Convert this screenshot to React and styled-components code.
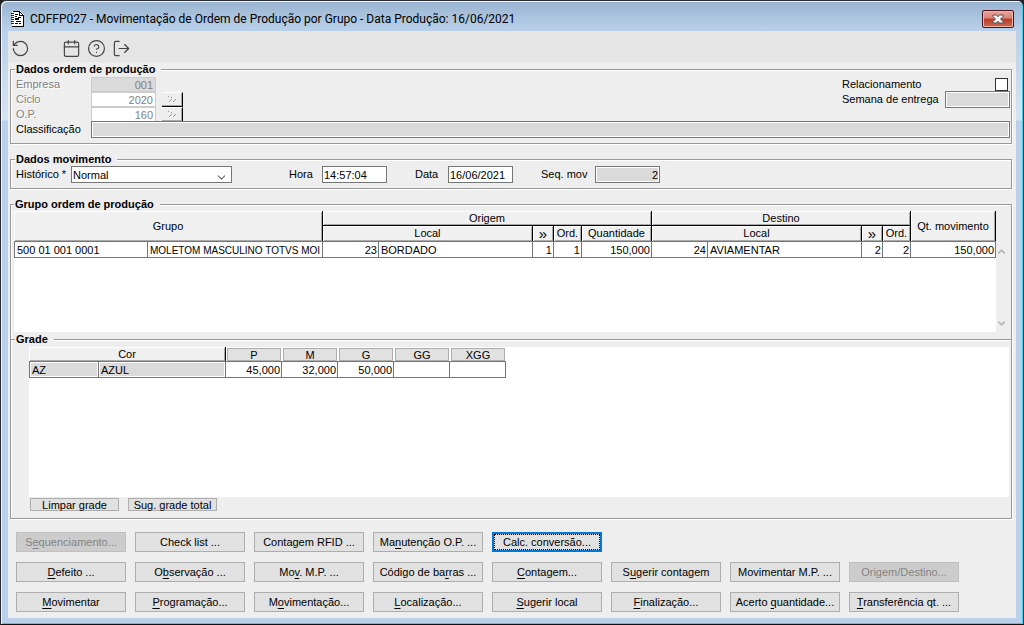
import React from "react";
import styled, { createGlobalStyle, css } from "styled-components";
import {
  Calendar,
  ChevronDown,
  ChevronUp,
  CircleHelp,
  LogOut,
  RotateCcw,
} from "lucide-react";

const actions = [
  [
    { label: "S&equenciamento...", disabled: true },
    { label: "Check list ..." },
    { label: "Contagem RFID ..." },
    { label: "Ma&nutenção O.P. ..." },
    { label: "Calc. conversão...", active: true },
  ],
  [
    { label: "&Defeito ..." },
    { label: "O&bservação ..." },
    { label: "Mo&v. M.P. ..." },
    { label: "Código de ba&rras ..." },
    { label: "&Contagem..." },
    { label: "S&ugerir contagem" },
    { label: "Movimentar M.P. ..." },
    { label: "Origem/Destino...", disabled: true },
  ],
  [
    { label: "&Movimentar" },
    { label: "&Programação..." },
    { label: "M&ovimentação..." },
    { label: "&Localização..." },
    { label: "&Sugerir local" },
    { label: "&Finalização..." },
    { label: "Acerto &quantidade..." },
    { label: "&Transferência qt. ..." },
  ],
];

const sizes = [
  { name: "P", value: "45,000" },
  { name: "M", value: "32,000" },
  { name: "G", value: "50,000" },
  { name: "GG", value: "" },
  { name: "XGG", value: "" },
];

const groupColumns = [134, null, 56, 154, 21, 28, 70, 56, 154, 21, 28, 85];
const gradeColumns = [70, 127, 56, 56, 56, 56, 56];

// "&" marks the access key of a label
const Mnemonic = ({ text }) => {
  const at = text.indexOf("&");
  if (at < 0) return <span>{text}</span>;
  return (
    <span>
      {text.slice(0, at)}
      <u>{text[at + 1]}</u>
      {text.slice(at + 2)}
    </span>
  );
};

const Columns = ({ widths }) => (
  <colgroup>
    {widths.map((w, i) => (
      <col key={i} width={w ?? undefined} />
    ))}
  </colgroup>
);

const DocumentIcon = () => (
  <svg width="13" height="16" viewBox="0 0 13 16" shapeRendering="crispEdges">
    <path d="M1 0h8l4 4v12H1z" fill="#fff" />
    <path d="M2 0h6v1H2zM1 15h11v1H1zM12 4h1v12h-1zM8 0h1v4h4v1H8z" fill="#000" />
    <path d="M9 1h1v1H9zM10 2h1v1h-1zM11 3h1v1h-1z" fill="#000" />
    <path
      d="M4 3h3v1H4zM4 5h2v1H4zM7 6h3v1H7zM4 7h4v2H4zM5 10h5v1H5zM4 12h3v1H4zM8 12h2v1H8z"
      fill="#000"
    />
    <path
      d="M0 2h3v1H0zM0 4h3v1H0zM0 6h3v1H0zM0 8h3v1H0zM0 10h3v1H0zM0 12h3v1H0z"
      fill="#222"
    />
  </svg>
);

const CloseIcon = () => (
  <svg width="12" height="10" viewBox="0 0 12 10">
    <path
      d="M1 1h3.500L6 2.800 7.500 1H11v1.500L8.500 5 11 7.500V9H7.500L6 7.200 4.500 9H1V7.500L3.500 5 1 2.500z"
      fill="#f5f5f5"
      stroke="#4d5564"
      strokeWidth="1"
    />
  </svg>
);

const LookupIcon = () => (
  <svg width="12" height="8" viewBox="0 0 12 8">
    <path d="M2 0l1 1M5 1l1 1M3 6l3-3M7 6l3-3" stroke="#999" />
    <path d="M4 7l3-3M8 7l3-3" stroke="#fff" />
  </svg>
);

export default function App() {
  return (
    <Window>
      <GlobalStyle />
      <TitleBar>
        <DocumentIcon />
        <Title>
          CDFFP027 - Movimentação de Ordem de Produção por Grupo - Data
          Produção: 16/06/2021
        </Title>
        <CloseButton aria-label="Fechar">
          <CloseIcon />
        </CloseButton>
      </TitleBar>
      <Client>
        <Toolbar>
          <ToolButton aria-label="Desfazer" $spaced>
            <RotateCcw size={19} strokeWidth={1.5} />
          </ToolButton>
          <ToolButton aria-label="Calendário">
            <Calendar size={19} strokeWidth={1.5} />
          </ToolButton>
          <ToolButton aria-label="Ajuda">
            <CircleHelp size={19} strokeWidth={1.5} />
          </ToolButton>
          <ToolButton aria-label="Sair">
            <LogOut size={19} strokeWidth={1.5} />
          </ToolButton>
        </Toolbar>

        <Group>
          <Legend>Dados ordem de produção</Legend>
          <OrderHead>
            <div>
              <Row>
                <Label htmlFor="empresa" $width={76} $muted>
                  Empresa
                </Label>
                <FlatField id="empresa" defaultValue="001" readOnly $filled />
              </Row>
              <Row>
                <Label htmlFor="ciclo" $width={76} $muted>
                  Ciclo
                </Label>
                <FlatField id="ciclo" defaultValue="2020" readOnly />
                <LookupButton aria-label="Pesquisar ciclo">
                  <LookupIcon />
                </LookupButton>
              </Row>
              <Row>
                <Label htmlFor="op" $width={76} $muted>
                  O.P.
                </Label>
                <FlatField id="op" defaultValue="160" readOnly />
                <LookupButton aria-label="Pesquisar O.P.">
                  <LookupIcon />
                </LookupButton>
              </Row>
            </div>
            <div>
              <Row>
                <Label htmlFor="relacionamento" $width={104}>
                  Relacionamento
                </Label>
                <CheckBox id="relacionamento" type="checkbox" />
              </Row>
              <Row>
                <Label htmlFor="semana" $width={104}>
                  Semana de entrega
                </Label>
                <Field id="semana" readOnly $filled />
              </Row>
            </div>
          </OrderHead>
          <FieldRow>
            <Label htmlFor="classificacao" $width={76}>
              Classificação
            </Label>
            <Field id="classificacao" readOnly $filled $grow />
          </FieldRow>
        </Group>

        <Group>
          <Legend>Dados movimento</Legend>
          <FieldRow>
            <Label htmlFor="historico" $width={56}>
              Histórico *
            </Label>
            <SelectBox>
              <select id="historico" defaultValue="Normal">
                <option>Normal</option>
              </select>
              <ChevronDown size={13} strokeWidth={2} />
            </SelectBox>
            <Pair>
              <Label htmlFor="hora" $width={34}>
                Hora
              </Label>
              <Field id="hora" defaultValue="14:57:04" />
            </Pair>
            <Pair $near>
              <Label htmlFor="data" $width={34}>
                Data
              </Label>
              <Field id="data" defaultValue="16/06/2021" />
            </Pair>
            <Pair $near>
              <Label htmlFor="seq" $width={55}>
                Seq. mov
              </Label>
              <Field id="seq" defaultValue="2" readOnly $filled $right />
            </Pair>
          </FieldRow>
        </Group>

        <Group $open>
          <Legend>Grupo ordem de produção</Legend>
          <GroupPanel>
            <GroupArea>
              <GroupTable>
                <Columns widths={groupColumns} />
                <thead>
                  <tr>
                    <Head colSpan={2} rowSpan={2}>
                      Grupo
                    </Head>
                    <Head colSpan={5} $line>
                      Origem
                    </Head>
                    <Head colSpan={4} $line>
                      Destino
                    </Head>
                    <Head rowSpan={2}>Qt. movimento</Head>
                  </tr>
                  <tr>
                    <Head colSpan={2}>Local</Head>
                    <Head $glyph>»</Head>
                    <Head>Ord.</Head>
                    <Head>Quantidade</Head>
                    <Head colSpan={2}>Local</Head>
                    <Head $glyph>»</Head>
                    <Head>Ord.</Head>
                  </tr>
                </thead>
                <tbody>
                  <tr>
                    <Cell>500 01 001 0001</Cell>
                    <Cell $small>MOLETOM MASCULINO TOTVS MOI</Cell>
                    <Cell $right>23</Cell>
                    <Cell>BORDADO</Cell>
                    <Cell $right>1</Cell>
                    <Cell $right>1</Cell>
                    <Cell $right>150,000</Cell>
                    <Cell $right>24</Cell>
                    <Cell>AVIAMENTAR</Cell>
                    <Cell $right>2</Cell>
                    <Cell $right>2</Cell>
                    <Cell $right>150,000</Cell>
                  </tr>
                </tbody>
              </GroupTable>
              <Blank />
            </GroupArea>
            <ScrollTrack>
              <ChevronUp size={11} strokeWidth={4} />
              <ChevronDown size={11} strokeWidth={4} />
            </ScrollTrack>
          </GroupPanel>
        </Group>

        <Group $joined>
          <Legend>Grade</Legend>
          <GradePanel>
            <GradeTable>
              <Columns widths={gradeColumns} />
              <thead>
                <tr>
                  <Head colSpan={2}>Cor</Head>
                  {sizes.map(({ name }) => (
                    <SizeHead key={name}>
                      <span>{name}</span>
                    </SizeHead>
                  ))}
                </tr>
              </thead>
              <tbody>
                <tr>
                  <Cell $filled>AZ</Cell>
                  <Cell $filled>AZUL</Cell>
                  {sizes.map(({ name, value }) => (
                    <Cell key={name} $right>
                      {value}
                    </Cell>
                  ))}
                </tr>
              </tbody>
            </GradeTable>
          </GradePanel>
          <GradeActions>
            <SmallButton>Limpar grade</SmallButton>
            <SmallButton>Sug. grade total</SmallButton>
          </GradeActions>
        </Group>

        <Actions>
          {actions.map((row, i) => (
            <ActionRow key={i}>
              {row.map(({ label, disabled, active }) => (
                <ActionButton key={label} disabled={disabled} $active={active}>
                  <Mnemonic text={label} />
                </ActionButton>
              ))}
            </ActionRow>
          ))}
        </Actions>
      </Client>
    </Window>
  );
}

const GlobalStyle = createGlobalStyle`
  * {
    box-sizing: border-box;
  }
  body {
    margin: 0;
    background: #222;
  }
  body, button, input, select, table {
    font-family: "Liberation Sans", Arial, sans-serif;
    font-size: 11px;
    line-height: 13px;
    color: #000;
  }
`;

const Window = styled.div`
  min-height: 100vh;
  display: flex;
  flex-direction: column;
  padding: 0 6px 6px;
  border: 1px solid #2b2b36;
  border-right-color: #111;
  border-bottom-color: #111;
  border-radius: 6px 6px 0 0;
  background: linear-gradient(
    #99b4d1 0,
    #b9d1ea 30px,
    #d6e4f2 119px,
    #b9d1ea 120px
  );
  box-shadow: inset 1px 1px 0 #f4f8fc, inset -1px -1px 0 #2fd5ee;
`;

const TitleBar = styled.header`
  height: 30px;
  display: flex;
  align-items: center;
  gap: 6px;
  padding: 6px 3px 0 4px;
`;

const Title = styled.h1`
  flex: 1;
  margin: 0;
  font-family: Roboto, "Open Sans", sans-serif;
  font-size: 12px;
  font-weight: 400;
  line-height: 16px;
  white-space: nowrap;
`;

const CloseButton = styled.button`
  width: 32px;
  height: 18px;
  display: flex;
  align-items: center;
  justify-content: center;
  padding: 0;
  border: 1px solid #4f1220;
  border-radius: 2px;
  background: linear-gradient(#e8a49b, #d98377 45%, #b93a26 50%, #cf6a50);
  box-shadow: inset 0 0 0 1px #eab5aa;
`;

const Client = styled.main`
  flex: 1;
  margin: 0 1px;
  background: #eee;
`;

const Toolbar = styled.div`
  height: 31px;
  display: flex;
  align-items: center;
  gap: 6px;
  padding: 4px 3px 0;
  background: #e5e5e5;
`;

const ToolButton = styled.button`
  display: flex;
  padding: 0;
  border: 0;
  background: none;
  color: #444;
  margin-right: ${({ $spaced }) => ($spaced ? "26px" : 0)};
`;

const Group = styled.fieldset`
  min-width: 0;
  margin: 0 4px 8px 2px;
  padding: 0 1px 5px 4px;
  border: 1px solid #999;
  box-shadow: 1px 1px 0 #fff, inset 1px 1px 0 #fff;

  ${({ $open }) =>
    $open &&
    css`
      margin-bottom: 0;
      padding: 0 4px 7px 3px;
      border-bottom: 0;
      box-shadow: 1px 0 0 #fff, inset 1px 1px 0 #fff;
    `}
  ${({ $joined }) =>
    $joined &&
    css`
      margin-top: -7px;
      margin-bottom: 13px;
      padding: 1px 2px 7px 4px;
    `}
`;

const Legend = styled.legend`
  height: 14px;
  padding: 0 6px 0 1px;
  background: #eee;
  font-weight: 700;
  line-height: 14px;
`;

const OrderHead = styled.div`
  height: 45px;
  display: flex;
  justify-content: space-between;
  padding-top: 1px;
`;

const Row = styled.div`
  height: 15px;
  display: flex;
  align-items: center;
`;

const FieldRow = styled.div`
  height: 17px;
  display: flex;
  align-items: center;
`;

const Pair = styled.div`
  display: flex;
  align-items: center;
  margin-left: ${({ $near }) => ($near ? "27px" : "56px")};
`;

const Label = styled.label`
  flex: none;
  width: ${({ $width }) => $width}px;
  padding-left: 1px;
  white-space: nowrap;
  ${({ $muted }) =>
    $muted &&
    css`
      color: #808080;
      text-shadow: 1px 1px 0 #fff;
    `}
`;

const Field = styled.input`
  width: 65px;
  height: 17px;
  min-width: 0;
  padding: 0 1px;
  border: 1px solid #767676;
  border-radius: 0;
  outline: 0;
  background: ${({ $filled }) => ($filled ? "#dadada" : "#fff")};
  box-shadow: inset 0 0 0 1px #fff;
  text-align: ${({ $right }) => ($right ? "right" : "left")};
  flex: ${({ $grow }) => ($grow ? 1 : "none")};
`;

const FlatField = styled(Field)`
  height: 15px;
  padding: 1px 2px 0;
  border-color: #ccc;
  box-shadow: none;
  color: #808080;
  text-align: right;
`;

const LookupButton = styled.button`
  width: 21px;
  height: 15px;
  display: flex;
  align-items: center;
  justify-content: center;
  margin-left: 6px;
  padding: 0;
  border: solid;
  border-width: 1px 1px 1px 0;
  border-color: #fff #000 #000 #fff;
  background: #eee;
  box-shadow: inset -1px -1px 0 #aaa;
`;

const CheckBox = styled.input`
  appearance: none;
  width: 13px;
  height: 13px;
  margin: 0 2px 0 auto;
  border: 1px solid #333;
  background: #fff;
`;

const SelectBox = styled.div`
  width: 161px;
  height: 17px;
  display: grid;
  grid-template-columns: 1fr 16px;
  align-items: center;
  border: 1px solid #767676;
  background: #fff;
  color: #666;

  select {
    grid-area: 1 / 1 / 2 / 3;
    height: 15px;
    padding: 0 1px;
    border: 0;
    outline: 0;
    background: none;
    appearance: none;
  }
  svg {
    grid-area: 1 / 2 / 2 / 3;
    margin-top: 4px;
    pointer-events: none;
  }
`;

const GroupPanel = styled.div`
  height: 121px;
  display: flex;
`;

const GroupArea = styled.div`
  flex: 1;
  min-width: 0;
  display: flex;
  flex-direction: column;
`;

const Blank = styled.div`
  flex: 1;
  background: #fff;
`;

const GroupTable = styled.table`
  width: 100%;
  table-layout: fixed;
  border-collapse: separate;
  border-spacing: 0;
  background: #fff;
`;

const Head = styled.th`
  height: 15px;
  padding: 0;
  border-right: 1px solid #000;
  border-bottom: ${({ $line }) => ($line ? "1px solid #000" : 0)};
  background: #f0f0f0;
  box-shadow: inset 1px 1px 0 #fff, inset -1px -1px 0 #aaa;
  font-size: ${({ $glyph }) => ($glyph ? "15px" : "11px")};
  font-weight: 400;
  white-space: nowrap;
`;

const Cell = styled.td`
  height: 17px;
  padding: 1px 1px 0 2px;
  overflow: hidden;
  border: 1px solid #767676;
  border-left-width: 0;
  background: ${({ $filled }) => ($filled ? "#dadada" : "#fff")};
  box-shadow: inset 0 0 0 1px #fff;
  font-size: ${({ $small }) => ($small ? "10px" : "11px")};
  text-align: ${({ $right }) => ($right ? "right" : "left")};
  white-space: nowrap;

  &:first-child {
    border-left-width: 1px;
  }
`;

const ScrollTrack = styled.div`
  width: 11px;
  display: flex;
  flex-direction: column;
  justify-content: space-between;
  padding: 35px 0 3px;
  background: #eee;
  color: #bbb;
`;

const GradePanel = styled.div`
  height: 150px;
  margin-left: 14px;
  background: #fff;
`;

const GradeTable = styled.table`
  table-layout: fixed;
  width: 477px;
  border-collapse: separate;
  border-spacing: 0;

  th {
    height: 14px;
    line-height: 12px;
  }
`;

const SizeHead = styled.th`
  padding: 1px 1px 0;
  font-weight: 400;

  span {
    display: block;
    height: 13px;
    border: 1px solid #adadad;
    background: #e1e1e1;
  }
`;

const GradeActions = styled.div`
  display: flex;
  gap: 9px;
  padding: 1px 0 0 15px;
`;

const PushButton = styled.button`
  padding: 0;
  border: 1px solid #adadad;
  border-radius: 0;
  background: #e1e1e1;
  white-space: nowrap;
`;

const SmallButton = styled(PushButton)`
  width: 89px;
  height: 13px;
  padding-top: 1px;
  line-height: 11px;
`;

const Actions = styled.div`
  display: flex;
  flex-direction: column;
  gap: 10px;
  padding: 0 8px 5px;
`;

const ActionRow = styled.div`
  display: flex;
  gap: 9px;
`;

const ActionButton = styled(PushButton)`
  width: 110px;
  height: 20px;

  u {
    text-underline-offset: 2px;
  }
  &:disabled {
    border-color: #bfbfbf;
    background: #ccc;
    color: #838383;
  }
  ${({ $active }) =>
    $active &&
    css`
      border: 2px solid #0078d7;
      outline: 1px dotted #000;
      outline-offset: -3px;
    `}
`;
